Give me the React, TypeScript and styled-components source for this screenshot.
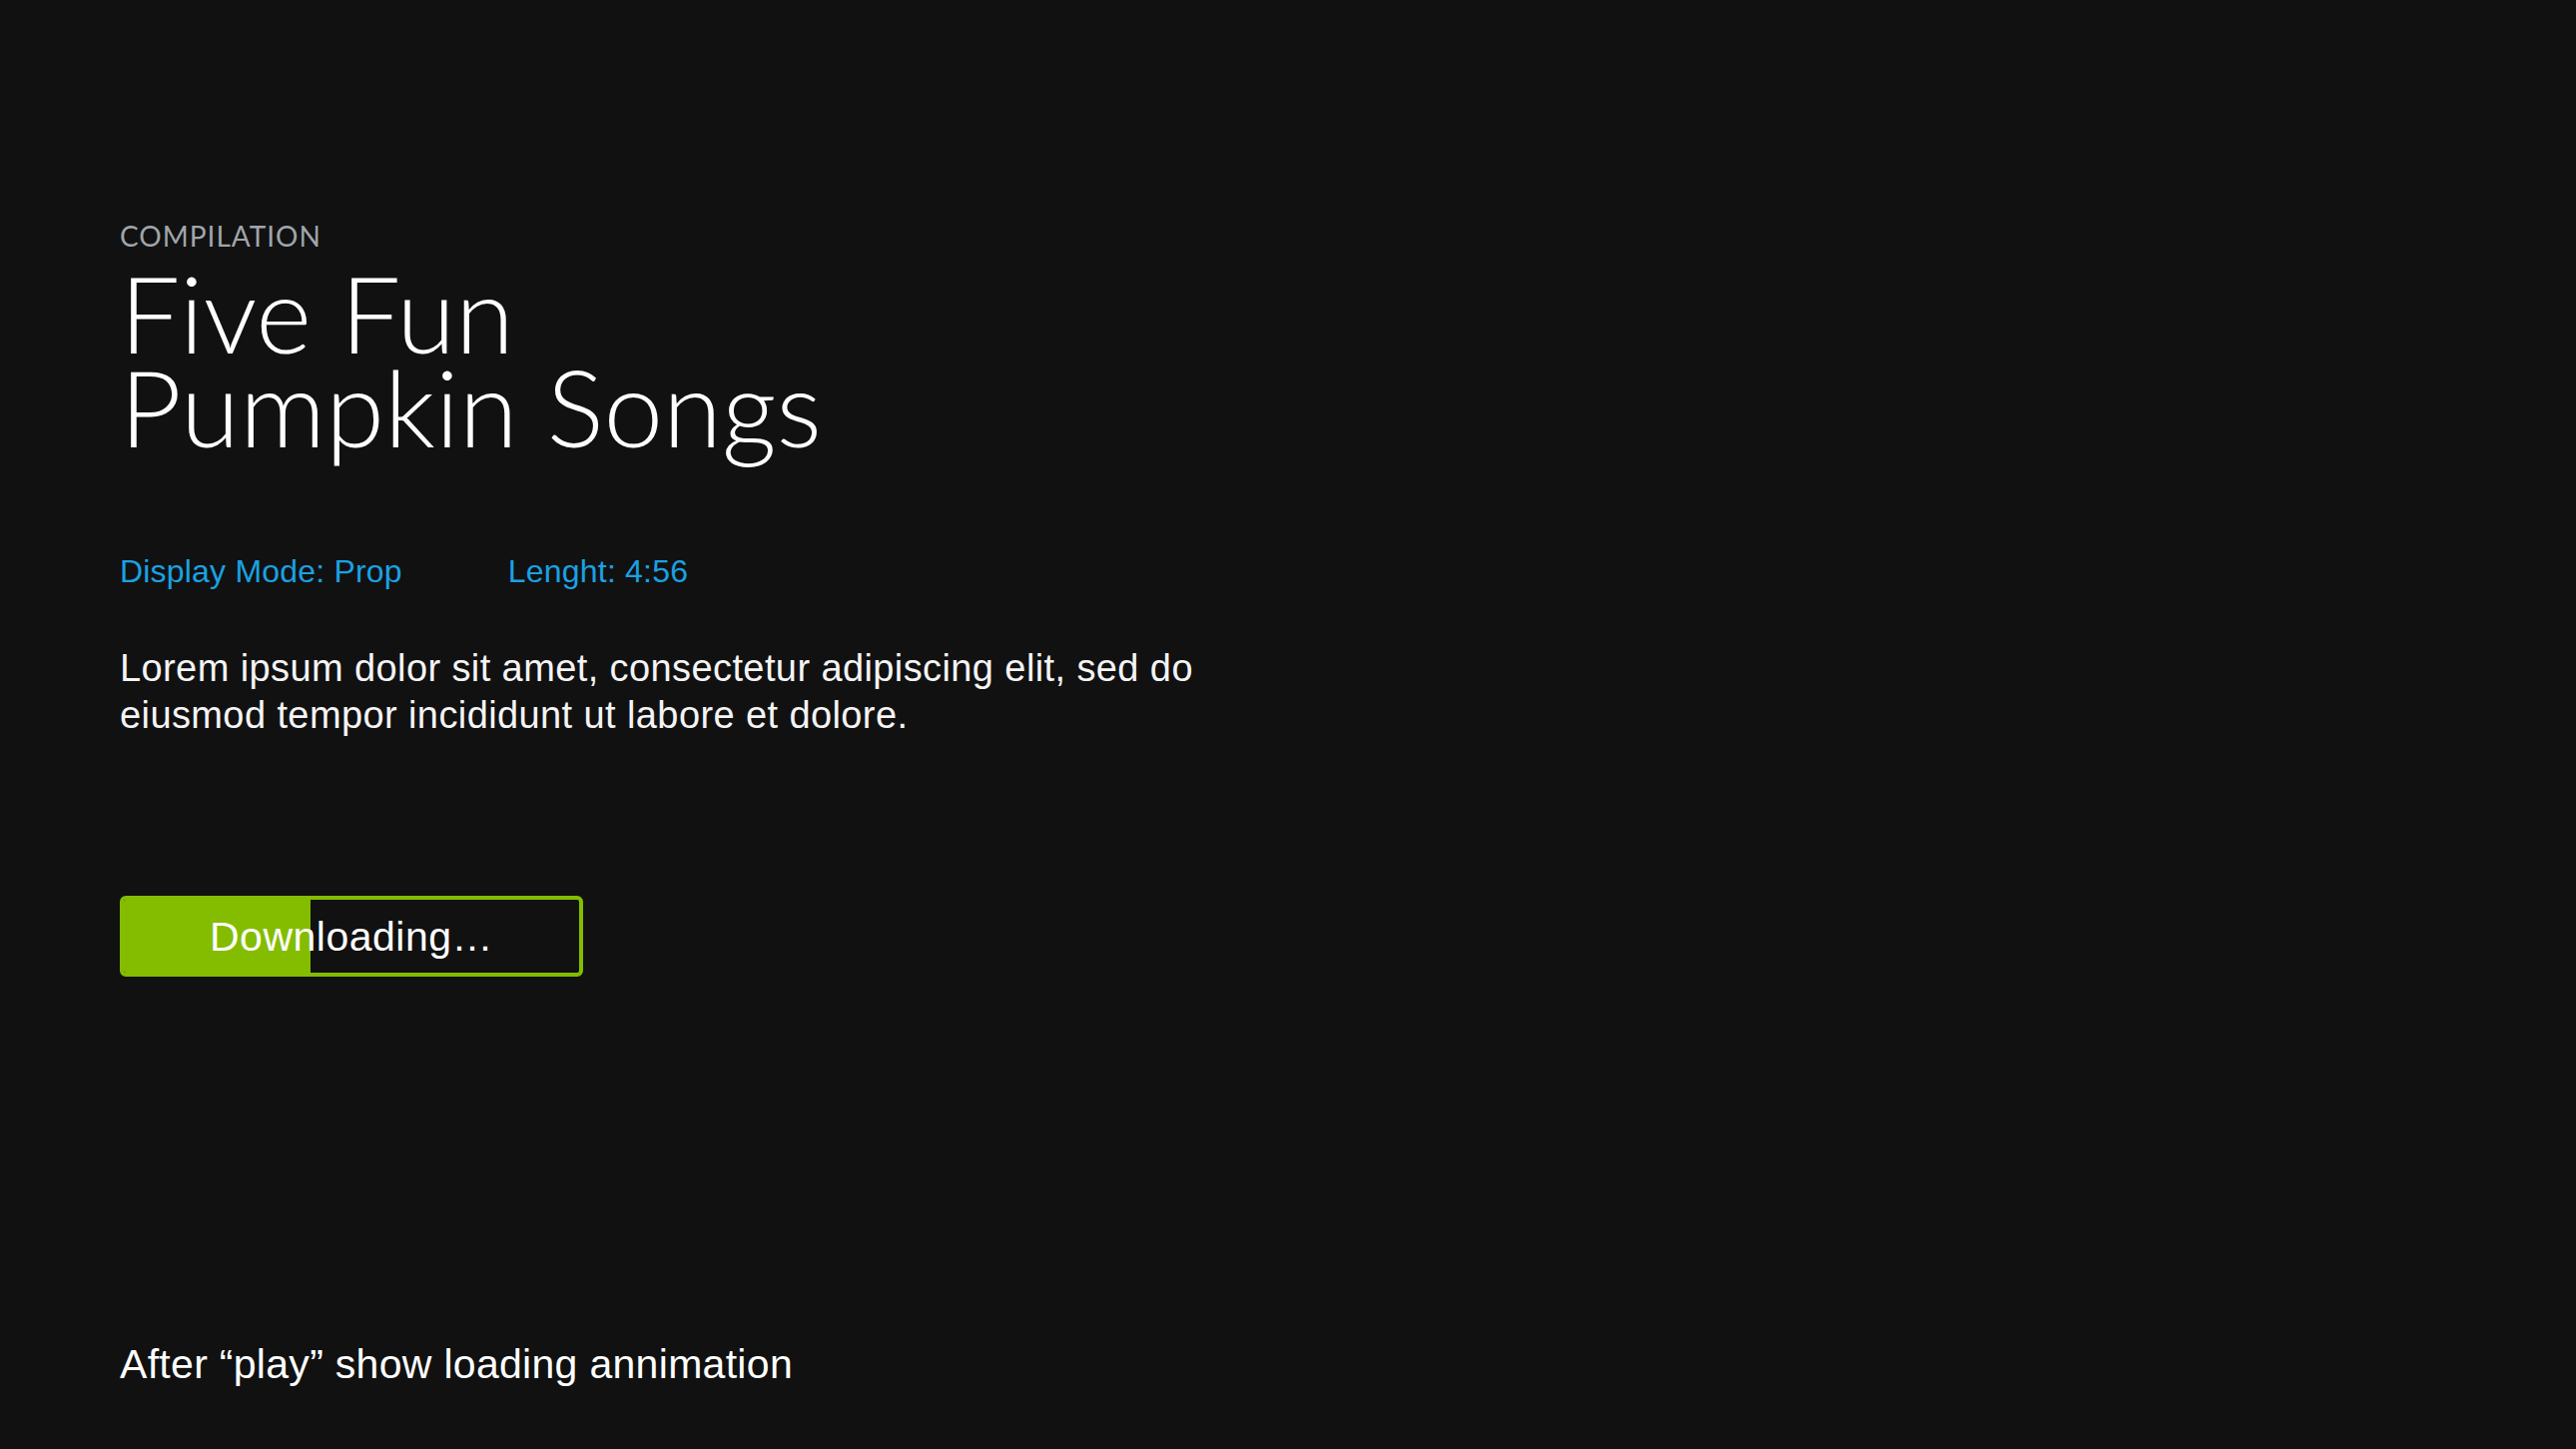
import React from 'react'
import styled, { createGlobalStyle } from 'styled-components'

const GlobalStyle = createGlobalStyle`
  html, body {
    margin: 0;
    padding: 0;
    background: #111111;
  }
  body {
    font-family: 'Liberation Sans', Arial, sans-serif;
    color: #ffffff;
  }
`

const progress = 0.41

export default function App() {
  return (
    <Page>
      <GlobalStyle />
      <Kicker>COMPILATION</Kicker>
      <Title>
        Five Fun
        <br />
        Pumpkin Songs
      </Title>
      <Meta>
        <MetaItem>Display Mode: Prop</MetaItem>
        <MetaItem>Lenght: 4:56</MetaItem>
      </Meta>
      <Description>
        Lorem ipsum dolor sit amet, consectetur adipiscing elit, sed do
        <br />
        eiusmod tempor incididunt ut labore et dolore.
      </Description>
      <ProgressButton type="button">
        <Fill style={{ width: `${progress * 100}%` }} />
        <ButtonLabel>Downloading…</ButtonLabel>
      </ProgressButton>
      <Note>After “play” show loading annimation</Note>
    </Page>
  )
}

const Page = styled.div`
  box-sizing: border-box;
  min-height: 1451px;
  padding: 219px 0 0 120px;
  display: flex;
  flex-direction: column;
  align-items: flex-start;
`
const Kicker = styled.div`
  font-family: Lato, sans-serif;
  font-size: 28px;
  line-height: 34px;
  color: #a0a6ab;
  letter-spacing: 1px;
`
const Title = styled.h1`
  margin: 13px 0 0;
  font-family: Lato, sans-serif;
  font-weight: 300;
  font-size: 107px;
  line-height: 94px;
  color: #ffffff;
`
const Meta = styled.div`
  margin-top: 99px;
  display: flex;
  gap: 106px;
`
const MetaItem = styled.span`
  font-size: 32px;
  line-height: 38px;
  letter-spacing: 0.2px;
  color: #1ba1e2;
`
const Description = styled.p`
  margin: 55px 0 0;
  font-size: 38px;
  line-height: 47px;
  letter-spacing: 0.4px;
  color: #f4f4f4;
`
const ProgressButton = styled.button`
  position: relative;
  margin-top: 157px;
  width: 464px;
  height: 81px;
  padding: 0;
  border: 4px solid #84bd00;
  border-radius: 6px;
  background: #111111;
  overflow: hidden;
  display: flex;
  align-items: center;
  justify-content: center;
  cursor: pointer;
`
const Fill = styled.div`
  position: absolute;
  left: 0;
  top: 0;
  bottom: 0;
  background: #84bd00;
`
const ButtonLabel = styled.span`
  position: relative;
  font-family: 'Liberation Sans', Arial, sans-serif;
  font-size: 41px;
  line-height: 46px;
  letter-spacing: 0.5px;
  color: #ffffff;
`
const Note = styled.div`
  margin-top: 364px;
  font-size: 41px;
  line-height: 48px;
  letter-spacing: 0.3px;
  color: #ffffff;
`
